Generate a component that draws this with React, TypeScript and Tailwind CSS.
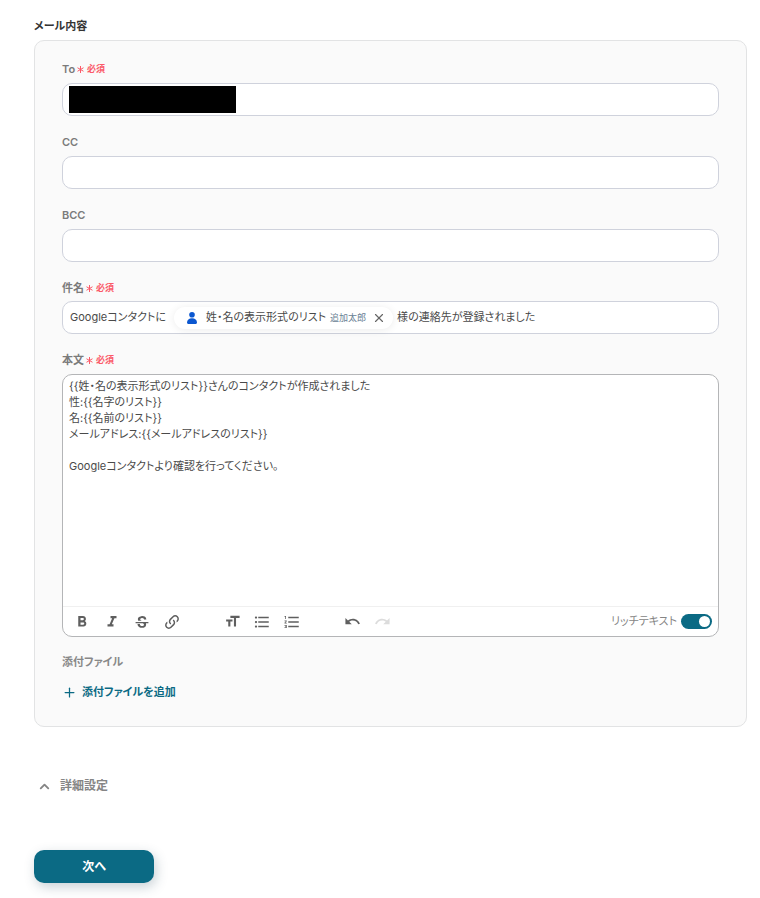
import { useState, type ReactNode } from "react";
import {
  MdFormatBold,
  MdFormatItalic,
  MdFormatListBulleted,
  MdFormatListNumbered,
  MdFormatSize,
  MdRedo,
  MdUndo,
} from "react-icons/md";
import { ChevronUp, Plus, X } from "lucide-react";

const initialBody = `{{姓・名の表示形式のリスト}}さんのコンタクトが作成されました
性:{{名字のリスト}}
名:{{名前のリスト}}
メールアドレス:{{メールアドレスのリスト}}

Googleコンタクトより確認を行ってください。`;

function FieldLabel({ htmlFor, id, required, children }: { htmlFor?: string; id?: string; required?: boolean; children: ReactNode }) {
  return (
    <label htmlFor={htmlFor} id={id} className="flex h-4 items-center gap-0.5 text-[11px] leading-4 font-semibold text-[#7b7b7b]">
      {children}
      {required && (
        <span className="flex items-center gap-[3px] text-[9px] font-semibold text-[#fb5a69]">
          <svg viewBox="0 0 7 7" className="size-[7px]" stroke="currentColor" strokeWidth="1" aria-hidden="true">
            <path d="M3.5 0v7M.5 1.75l6 3.5M.5 5.25l6-3.5" />
          </svg>
          必須
        </span>
      )}
    </label>
  );
}

function ToolButton({ label, disabled, children }: { label: string; disabled?: boolean; children: ReactNode }) {
  return (
    <button type="button" aria-label={label} disabled={disabled} className="flex size-[30px] items-center justify-center text-[#5f5f5f] disabled:text-[#dcdcdc]">
      {children}
    </button>
  );
}

function StrikeIcon() {
  return (
    <svg viewBox="0 0 24 24" className="size-[14px]" fill="currentColor" aria-hidden="true">
      <path d="M23,12V14H18.61C19.61,16.14 19.56,22 12.38,22C4.05,22.05 4.37,15.5 4.37,15.5L8.34,15.55C8.37,18.92 11.5,18.92 12.12,18.88C12.76,18.83 15.15,18.84 15.34,16.5C15.42,15.41 14.32,14.58 13.12,14H1V12H23M19.41,7.89L15.43,7.86C15.43,7.86 15.6,5.09 12.15,5.08C8.7,5.06 9,7.28 9,7.56C9.04,7.84 9.34,9.22 12,9.88H5.71C5.71,9.88 2.22,3.15 10.74,2C19.45,0.8 19.43,7.91 19.41,7.89Z" />
    </svg>
  );
}

function LinkIcon() {
  return (
    <svg viewBox="0 0 24 24" className="size-[18px]" fill="currentColor" aria-hidden="true">
      <path d="M10.59,13.41C11,13.8 11,14.44 10.59,14.83C10.2,15.22 9.56,15.22 9.17,14.83C7.22,12.88 7.22,9.71 9.17,7.76V7.76L12.71,4.22C14.66,2.27 17.83,2.27 19.78,4.22C21.73,6.17 21.73,9.34 19.78,11.29L18.29,12.78C18.3,11.96 18.17,11.14 17.89,10.36L18.36,9.88C19.54,8.71 19.54,6.81 18.36,5.64C17.19,4.46 15.29,4.46 14.12,5.64L10.59,9.17C9.41,10.34 9.41,12.24 10.59,13.41M13.41,9.17C13.8,8.78 14.44,8.78 14.83,9.17C16.78,11.12 16.78,14.29 14.83,16.24V16.24L11.29,19.78C9.34,21.73 6.17,21.73 4.22,19.78C2.27,17.83 2.27,14.66 4.22,12.71L5.71,11.22C5.7,12.04 5.83,12.86 6.11,13.65L5.64,14.12C4.46,15.29 4.46,17.19 5.64,18.36C6.81,19.54 8.71,19.54 9.88,18.36L13.41,14.83C14.59,13.66 14.59,11.76 13.41,10.59C13,10.2 13,9.56 13.41,9.17Z" />
    </svg>
  );
}

const box = "h-[33px] w-full rounded-[10px] border border-[#cfd2dc] bg-white";

export default function App() {
  const [body, setBody] = useState(initialBody);
  const [rich, setRich] = useState(true);

  return (
    <main className="min-h-screen bg-white pt-[18px] pr-[13px] pb-[15px] pl-[34px] font-['Inter','Noto_Sans_CJK_JP',sans-serif] text-[11px] text-[#4a4a4a] [font-feature-settings:'palt']">
      <h2 className="text-[11px] leading-4 font-semibold text-[#333]">メール内容</h2>

      <section className="mt-1.5 rounded-[10px] border border-[#e2e3e4] bg-[#fafafa] px-[27px] pt-5 pb-[26px]">
        <div className="flex flex-col gap-[18px]">
          <div className="flex flex-col gap-1.5">
            <FieldLabel htmlFor="to" required>To</FieldLabel>
            <div className={`${box} flex items-center px-1.5`}>
              <span className="h-[27px] w-[167px] shrink-0 bg-black" />
              <input id="to" className="h-full min-w-0 flex-1 px-1 outline-none" />
            </div>
          </div>

          <div className="flex flex-col gap-1.5">
            <FieldLabel htmlFor="cc">CC</FieldLabel>
            <input id="cc" className={`${box} px-2 outline-none`} />
          </div>

          <div className="flex flex-col gap-1.5">
            <FieldLabel htmlFor="bcc">BCC</FieldLabel>
            <input id="bcc" className={`${box} px-2 outline-none`} />
          </div>

          <div className="flex flex-col gap-[5px]">
            <FieldLabel id="subject" required>件名</FieldLabel>
            <div role="textbox" aria-labelledby="subject" className={`${box} flex items-center px-[7px] whitespace-nowrap`}>
              <span>Googleコンタクトに</span>
              <span className="mr-1 ml-2 flex h-[22px] items-center rounded-full bg-white pr-[7px] pl-3 shadow-[0_1px_8px_rgba(0,0,0,0.08)]">
                <svg viewBox="0 0 12 14" className="mr-2 h-[14px] w-3" fill="#0b57d0" aria-hidden="true">
                  <circle cx="6" cy="3.8" r="2.8" />
                  <path d="M1 11.5C1 8.8 3 7.2 6 7.2s5 1.6 5 4.3c0 .9-.6 1.5-1.5 1.5h-7C1.6 13 1 12.4 1 11.5z" />
                </svg>
                <span>姓・名の表示形式のリスト</span>
                <span className="ml-1 text-[9px] text-[#6a8194]">追加太郎</span>
                <button type="button" aria-label="削除" className="ml-1.5 text-[#666]">
                  <X size={14} strokeWidth={2} />
                </button>
              </span>
              <span>様の連絡先が登録されました</span>
            </div>
          </div>

          <div className="flex flex-col gap-1.5">
            <FieldLabel htmlFor="body" required>本文</FieldLabel>
            <div className="overflow-hidden rounded-[10px] border border-[#b4b5b7] bg-white">
              <textarea
                id="body"
                value={body}
                onChange={(e) => setBody(e.target.value)}
                className="block h-[231px] w-full resize-none px-1.5 pt-[3px] leading-4 outline-none"
              />
              <div className="flex h-[30px] items-center border-t border-[#f0f0f0] pr-1.5 pl-1">
                <ToolButton label="太字"><MdFormatBold size={18} /></ToolButton>
                <ToolButton label="斜体"><MdFormatItalic size={18} /></ToolButton>
                <ToolButton label="取り消し線"><StrikeIcon /></ToolButton>
                <ToolButton label="リンク"><LinkIcon /></ToolButton>
                <div className="ml-[30px] flex">
                  <ToolButton label="文字サイズ"><MdFormatSize size={17} /></ToolButton>
                  <ToolButton label="箇条書き"><MdFormatListBulleted size={18} /></ToolButton>
                  <ToolButton label="番号付きリスト"><MdFormatListNumbered size={18} /></ToolButton>
                </div>
                <div className="ml-[30px] flex">
                  <ToolButton label="元に戻す"><MdUndo size={17} /></ToolButton>
                  <ToolButton label="やり直す" disabled><MdRedo size={17} /></ToolButton>
                </div>
                <label className="ml-auto flex items-center gap-1 text-[#858585]">
                  リッチテキスト
                  <input type="checkbox" role="switch" checked={rich} onChange={(e) => setRich(e.target.checked)} className="peer sr-only" />
                  <span className="flex h-[15px] w-[31px] items-center rounded-full bg-[#bbb] px-0.5 peer-checked:justify-end peer-checked:bg-[#0b6a84]">
                    <span className="size-[11px] rounded-full bg-white" />
                  </span>
                </label>
              </div>
            </div>
          </div>
        </div>

        <h3 className="mt-[17px] text-[11px] leading-4 font-semibold text-[#888]">添付ファイル</h3>
        <button type="button" className="mt-3.5 flex h-4 items-center gap-[5px] text-[11px] leading-4 font-semibold text-[#0b6a84]">
          <Plus size={15} strokeWidth={2} />
          添付ファイルを追加
        </button>
      </section>

      <button type="button" className="mt-[49px] ml-[3px] flex h-5 items-center gap-2 text-[12px] font-semibold text-[#858585]">
        <ChevronUp size={15} strokeWidth={3} />
        詳細設定
      </button>

      <button type="button" className="mt-[54px] h-[33px] w-[120px] rounded-[10px] bg-[#0b6a84] text-[12px] font-bold text-white shadow-[2px_4px_12px_rgba(40,70,90,0.25)]">
        次へ
      </button>
    </main>
  );
}
